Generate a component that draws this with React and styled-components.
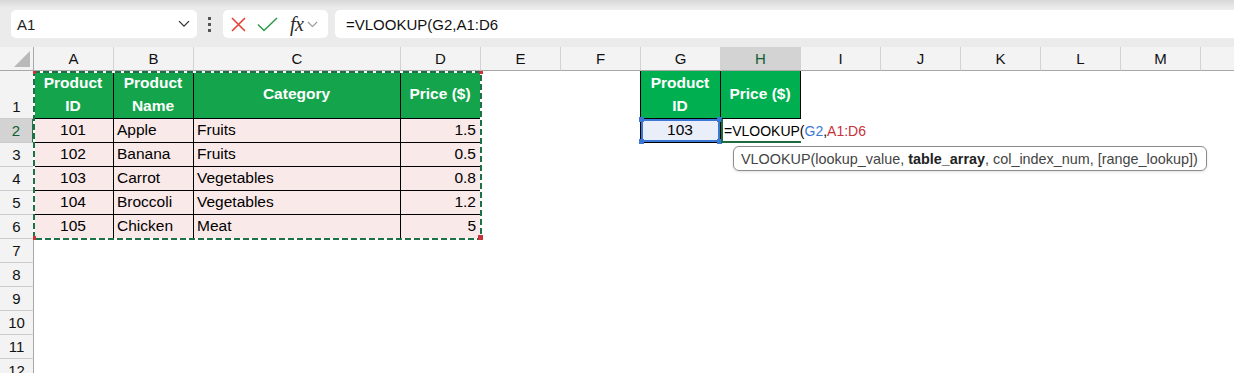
import React from 'react';
import styled, { createGlobalStyle, css } from 'styled-components';

const GlobalStyle = createGlobalStyle`
  html, body {
    margin: 0;
    padding: 0;
    background: #fff;
    overflow: hidden;
  }
  body {
    font-family: "Liberation Sans", Arial, sans-serif;
  }
`;

const FormulaBar = styled.div`
  height: 47px;
  box-sizing: border-box;
  display: flex;
  align-items: center;
  padding: 1px 0 0 11px;
  background: linear-gradient(#d8d8d8 0px, #ebebeb 8px, #ebebeb 100%);
`;

const NameBox = styled.div`
  width: 186px;
  height: 28px;
  box-sizing: border-box;
  display: flex;
  align-items: center;
  justify-content: space-between;
  padding: 0 7px 0 6px;
  background: #fff;
  border-radius: 5px;
  font-size: 15px;
  color: #1f1f1f;
`;

const Grip = styled.div`
  display: flex;
  flex-direction: column;
  gap: 3px;
  margin: 0 12px 0 11px;

  span {
    width: 3px;
    height: 3px;
    background: #555;
  }
`;

const IconBox = styled.div`
  width: 105px;
  height: 28px;
  box-sizing: border-box;
  display: flex;
  align-items: center;
  padding-left: 8px;
  background: #fff;
  border-radius: 5px;
`;

const Fx = styled.span`
  font-family: "Liberation Serif", "Times New Roman", serif;
  font-style: italic;
  font-size: 20px;
  color: #2b2b2b;
  margin: 0 4px 0 12px;
  letter-spacing: -0.5px;
`;

const FormulaInput = styled.div`
  flex: 1;
  height: 28px;
  margin-left: 7px;
  display: flex;
  align-items: center;
  padding-left: 11px;
  background: #fff;
  border-radius: 5px 0 0 5px;
  font-size: 15px;
  color: #111;
  white-space: nowrap;
`;

const Sheet = styled.div`
  position: relative;
  display: grid;
  grid-template-columns: 34px 80px 80px 207px repeat(11, 80px);
  grid-template-rows: 24px 48px repeat(11, 24px);
  background: #fff;
`;

const Corner = styled.div`
  position: relative;
  box-sizing: border-box;
  background: #f3f3f3;
  border-right: 1px solid #a8a8a8;
  border-bottom: 1px solid #a8a8a8;

  &::after {
    content: '';
    position: absolute;
    right: 3px;
    bottom: 3px;
    width: 16px;
    height: 16px;
    background: #b9b9b9;
    clip-path: polygon(100% 0, 100% 100%, 0 100%);
  }
`;

const ColHead = styled.div`
  box-sizing: border-box;
  display: flex;
  align-items: center;
  justify-content: center;
  font-size: 15px;
  background: ${p => (p.$selected ? '#d3d3d3' : '#f3f3f3')};
  color: ${p => (p.$selected ? '#105e31' : '#111')};
  border-right: 1px solid #d2d2d2;
  border-bottom: 1px solid #a8a8a8;
`;

const RowHead = styled.div`
  box-sizing: border-box;
  display: flex;
  align-items: flex-end;
  justify-content: center;
  padding-bottom: 2px;
  font-size: 15px;
  line-height: 18px;
  background: ${p => (p.$selected ? '#d3d3d3' : '#f3f3f3')};
  color: ${p => (p.$selected ? '#105e31' : '#111')};
  border-right: ${p => (p.$selected ? '2px solid #217346' : '1px solid #a8a8a8')};
  border-bottom: 1px solid #cbcbcb;
`;

const justify = { left: 'flex-start', center: 'center', right: 'flex-end' };

const Cell = styled.div`
  position: relative;
  box-sizing: border-box;
  display: flex;
  align-items: center;
  justify-content: ${p => justify[p.$align] || 'flex-start'};
  text-align: ${p => p.$align || 'left'};
  padding: 0 4px 0 3px;
  font-size: 15.5px;
  line-height: 22.5px;
  white-space: nowrap;
  color: #000;
  min-width: 0;

  ${p => (p.$kind === 'head' || p.$kind === 'lookupHead') && css`
    background: ${p.$kind === 'head' ? '#14a54c' : '#00b050'};
    color: #fff;
    font-weight: bold;
    border-right: 1px solid #000;
    border-bottom: 1px solid #000;
  `}

  ${p => p.$kind === 'data' && css`
    background: #fae9e9;
    border-right: 1px solid #000;
    border-bottom: 1px solid #000;
  `}

  ${p => p.$kind === 'input' && css`
    background: #e9eef8;
    border-right: 1px solid #000;
    border-bottom: 1px solid #000;
    box-shadow: inset 0 0 0 2px #3b78d6;
  `}

  ${p => p.$kind === 'active' && css`
    font-size: 14px;
    overflow: visible;
    z-index: 2;
    box-shadow: inset 2px 0 0 #1e6b3f, inset 0 -2px 0 #1e6b3f;
  `}

  ${p => p.$edge && css`
    margin-left: -1px;
    border-left: 1px solid #000;
  `}
`;

const Handle = styled.span`
  position: absolute;
  width: 5px;
  height: 5px;
  background: #3b78d6;
  ${p => (p.$v === 't' ? 'top: -2px;' : 'bottom: -2px;')}
  ${p => (p.$h === 'l' ? 'left: -2px;' : 'right: -2px;')}
`;

const Ref = styled.span`
  color: ${p => (p.$c === 'blue' ? '#3b78d6' : '#c7323b')};
`;

const Marquee = styled.svg`
  position: absolute;
  left: 33px;
  top: 24px;
  pointer-events: none;
  z-index: 3;
`;

const Tooltip = styled.div`
  position: absolute;
  left: 733px;
  top: 99px;
  width: 474px;
  height: 25px;
  box-sizing: border-box;
  display: flex;
  align-items: center;
  padding-left: 7px;
  background: #fff;
  border: 1px solid #8d8d8d;
  border-radius: 6px;
  box-shadow: 0 1px 3px rgba(0, 0, 0, 0.12);
  font-size: 14.4px;
  color: #444;
  white-space: nowrap;
  z-index: 4;

  b {
    color: #222;
  }
`;

const COLS = ['A', 'B', 'C', 'D', 'E', 'F', 'G', 'H', 'I', 'J', 'K', 'L', 'M', 'N'];

const products = [
  ['101', 'Apple', 'Fruits', '1.5'],
  ['102', 'Banana', 'Fruits', '0.5'],
  ['103', 'Carrot', 'Vegetables', '0.8'],
  ['104', 'Broccoli', 'Vegetables', '1.2'],
  ['105', 'Chicken', 'Meat', '5'],
];

const formula = (
  <>
    =VLOOKUP(<Ref $c="blue">G2</Ref>,<Ref $c="red">A1:D6</Ref>
  </>
);

function buildRows() {
  const rows = {};
  rows[1] = {
    A: { v: <>Product<br />ID</>, k: 'head', a: 'center' },
    B: { v: <>Product<br />Name</>, k: 'head', a: 'center' },
    C: { v: 'Category', k: 'head', a: 'center' },
    D: { v: 'Price ($)', k: 'head', a: 'center' },
    G: { v: <>Product<br />ID</>, k: 'lookupHead', a: 'center', edge: true },
    H: { v: 'Price ($)', k: 'lookupHead', a: 'center' },
  };
  products.forEach((p, i) => {
    rows[i + 2] = {
      A: { v: p[0], k: 'data', a: 'center' },
      B: { v: p[1], k: 'data' },
      C: { v: p[2], k: 'data' },
      D: { v: p[3], k: 'data', a: 'right' },
    };
  });
  rows[2].G = { v: '103', k: 'input', a: 'center', edge: true };
  rows[2].H = { v: formula, k: 'active' };
  return rows;
}

function ChevronDown({ color = '#444', size = 12 }) {
  return (
    <svg width={size} height={size * 0.6} viewBox="0 0 12 7">
      <path d="M1 1l5 5 5-5" fill="none" stroke={color} strokeWidth="1.3" />
    </svg>
  );
}

export default function App() {
  const rows = buildRows();

  return (
    <>
      <GlobalStyle />
      <FormulaBar>
        <NameBox>
          A1
          <ChevronDown color="#333" />
        </NameBox>
        <Grip>
          <span />
          <span />
          <span />
        </Grip>
        <IconBox>
          <svg width="15" height="15" viewBox="0 0 15 15">
            <path d="M1 1l13 13M14 1L1 14" stroke="#e5413b" strokeWidth="1.6" />
          </svg>
          <svg width="21" height="15" viewBox="0 0 21 15" style={{ marginLeft: 11 }}>
            <path d="M1 7.5l6 6L20 1" fill="none" stroke="#2f9e4d" strokeWidth="1.6" />
          </svg>
          <Fx>fx</Fx>
          <ChevronDown color="#9a9a9a" size={11} />
        </IconBox>
        <FormulaInput>=VLOOKUP(G2,A1:D6</FormulaInput>
      </FormulaBar>

      <Sheet>
        <Corner />
        {COLS.map(c => (
          <ColHead key={c} $selected={c === 'H'}>{c === 'N' ? '' : c}</ColHead>
        ))}
        {Array.from({ length: 12 }, (_, i) => i + 1).map(r => (
          <React.Fragment key={r}>
            <RowHead $selected={r === 2}>{r}</RowHead>
            {COLS.map(c => {
              const cell = (rows[r] && rows[r][c]) || {};
              return (
                <Cell key={c} $kind={cell.k} $align={cell.a} $edge={cell.edge}>
                  {cell.v && <span>{cell.v}</span>}
                  {cell.k === 'input' && (
                    <>
                      <Handle $v="t" $h="l" />
                      <Handle $v="t" $h="r" />
                      <Handle $v="b" $h="l" />
                      <Handle $v="b" $h="r" />
                    </>
                  )}
                </Cell>
              );
            })}
          </React.Fragment>
        ))}

        <Marquee width="450" height="170" viewBox="0 0 450 170">
          <rect x="1" y="1" width="447" height="167" fill="none" stroke="#fff" strokeWidth="2" />
          <rect x="1" y="1" width="447" height="167" fill="none" stroke="#1e7145" strokeWidth="2" strokeDasharray="6 3" />
          <rect x="0" y="0" width="3" height="3" fill="#c7323b" />
          <rect x="446" y="0" width="4" height="3" fill="#c7323b" />
          <rect x="0" y="165" width="3" height="4" fill="#c7323b" />
          <rect x="445" y="164" width="5" height="5" fill="#c7323b" />
        </Marquee>

        <Tooltip>
          VLOOKUP(lookup_value,&nbsp;<b>table_array</b>, col_index_num, [range_lookup])
        </Tooltip>
      </Sheet>
    </>
  );
}
